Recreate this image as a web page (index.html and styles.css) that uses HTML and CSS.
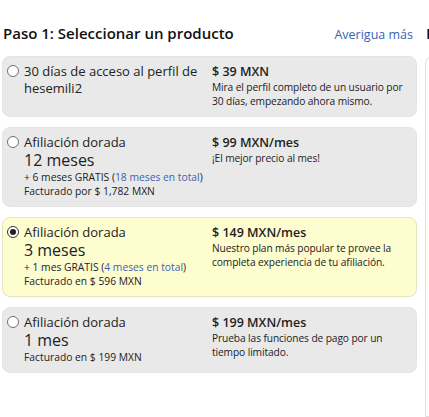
FILE: index.html
```html
<!DOCTYPE html>
<html lang="es">
<head>
    <meta charset="UTF-8">
    <meta name="viewport" content="width=device-width, initial-scale=1.0">
    <title>Seleccionar un producto</title>
    <link rel="stylesheet" href="styles.css">
</head>
<body>
<div class="page">
  <div class="main">
    <div class="head">
      <h2>Paso 1: Seleccionar un producto</h2>
      <a href="#" class="more">Averigua más</a>
    </div>

    <label class="plan">
      <div class="left">
        <span class="radio"></span>
        <div class="name">30 días de acceso al perfil de hesemili2</div>
      </div>
      <div class="right">
        <div class="price">$ 39 MXN</div>
        <div class="desc">Mira el perfil completo de un usuario por 30 días, empezando ahora mismo.</div>
      </div>
    </label>

    <label class="plan">
      <div class="left">
        <span class="radio"></span>
        <div>
          <div class="name">Afiliación dorada</div>
          <div class="term">12 meses</div>
          <div class="small">+ 6 meses GRATIS (<a href="#">18 meses en total</a>)</div>
          <div class="small">Facturado por $ 1,782 MXN</div>
        </div>
      </div>
      <div class="right">
        <div class="price">$ 99 MXN/mes</div>
        <div class="desc">¡El mejor precio al mes!</div>
      </div>
    </label>

    <label class="plan selected">
      <div class="left">
        <span class="radio checked"></span>
        <div>
          <div class="name">Afiliación dorada</div>
          <div class="term">3 meses</div>
          <div class="small">+ 1 mes GRATIS (<a href="#">4 meses en total</a>)</div>
          <div class="small">Facturado en $ 596 MXN</div>
        </div>
      </div>
      <div class="right">
        <div class="price">$ 149 MXN/mes</div>
        <div class="desc">Nuestro plan más popular te provee la completa experiencia de tu afiliación.</div>
      </div>
    </label>

    <label class="plan">
      <div class="left">
        <span class="radio"></span>
        <div>
          <div class="name">Afiliación dorada</div>
          <div class="term">1 mes</div>
          <div class="small">Facturado en $ 199 MXN</div>
        </div>
      </div>
      <div class="right">
        <div class="price">$ 199 MXN/mes</div>
        <div class="desc">Prueba las funciones de pago por un tiempo limitado.</div>
      </div>
    </label>
  </div>

  <div class="side">
    <div class="head">
      <h2>Paso 2: Pagar</h2>
    </div>
    <div class="side-box"></div>
  </div>
</div>
</body>
</html>
```

FILE: styles.css
```css
body { margin: 0; font-family: "Open Sans", Arial, sans-serif; color: #222; background: #fff; overflow: hidden; }
a { color: #3d5fb4; text-decoration: none; }
.page { display: flex; gap: 8px; padding-left: 2px; width: 429px; height: 417px; overflow: hidden; box-sizing: border-box; }
.main { width: 415px; flex: none; }
.head { display: flex; justify-content: space-between; align-items: baseline; height: 56px; padding-top: 22px; box-sizing: border-box; }
h2 { margin: 0 0 0 1px; font-size: 15px; font-weight: 600; color: #111; line-height: 22px; white-space: nowrap; }
.more { font-size: 12.5px; margin-right: 4px; }
.plan { display: flex; background: #e9e9e9; border: 1px solid #e4e4e4; border-radius: 8px; padding: 6px 4px 8px 4px; margin-bottom: 10px; }
.plan.selected { background: #fdfdd0; border-color: #e6e4bd; }
.left { display: flex; width: 205px; flex: none; }
.radio { width: 12px; height: 12px; border: 1px solid #707070; border-radius: 50%; background: #fff; flex: none; margin: 2px 5px 0 0; box-sizing: border-box; position: relative; }
.radio.checked { border-color: #333; }
.radio.checked::after { content: ""; position: absolute; left: 2px; top: 2px; width: 6px; height: 6px; border-radius: 50%; background: #222; }
.name { font-size: 13px; line-height: 17px; }
.term { font-size: 16px; line-height: 19px; }
.small { font-size: 10.3px; line-height: 14px; }
.right { flex: 1; }
.price { font-size: 12.5px; font-weight: 600; line-height: 17px; }
.desc { font-size: 10.2px; line-height: 14px; letter-spacing: -0.1px; }
.side { width: 300px; flex: none; }
.side-box { border: 1px solid #e0e0e0; border-radius: 8px 0 0 0; height: 361px; box-sizing: border-box; }
```
